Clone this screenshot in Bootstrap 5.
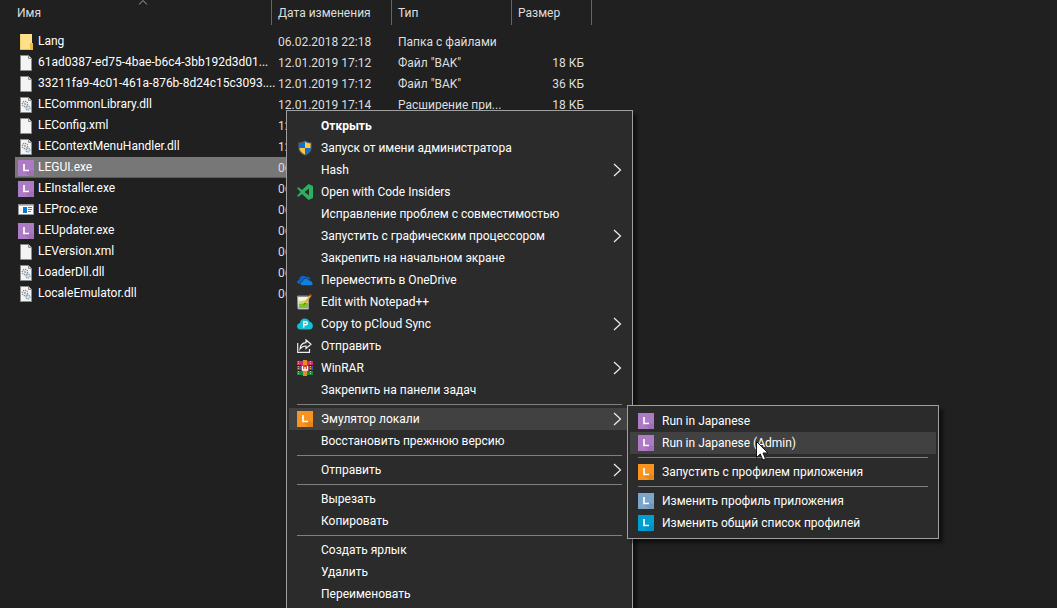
<!DOCTYPE html>
<html lang="ru">
<head>
<meta charset="utf-8">
<meta name="viewport" content="width=device-width, initial-scale=1">
<title>Locale Emulator</title>
<link href="https://cdn.jsdelivr.net/npm/bootstrap@5.3.0/dist/css/bootstrap.min.css" rel="stylesheet">
<style>
  body { background: #202020; color: #dedede; font: 12px/20px Roboto, "Open Sans", sans-serif; }
  .explorer { padding-left: 15px; }
  .sort-mark { top: 0; left: 50%; }
  .files { width: 577px; table-layout: fixed; border-collapse: separate; border-spacing: 0; }
  .files th { height: 25px; padding: 0 6px; font-weight: 400; border-right: 1px solid #636363; white-space: nowrap; }
  .files th:first-child { padding-left: 2px; }
  .files tbody::before { content: ""; display: block; height: 6px; }
  .files td { height: 21px; padding: 0 6px; white-space: nowrap; }
  .files td:first-child { padding: 0 0 0 3px; color: #fff; }
  .files td:last-child { padding-right: 8px; text-align: right; }
  .files tr.picked td { background: #777; box-shadow: inset 0 -1px #5c5c5c; }
  .name-col { width: 257px; } .date-col, .type-col { width: 120px; } .size-col { width: 80px; }
  .ico { width: 16px; height: 16px; flex: none; }
  .file-name { gap: 4px; line-height: 21px; }
  .context { background: #2b2b2b; border: 1px solid #a0a0a0; padding: 4px 2px; box-shadow: 4px 4px 3px rgba(0,0,0,.5); color: #fff; }
  .main-menu { top: 110px; left: 286px; width: 347px; }
  .sub-menu { top: -3px; left: calc(100% - 3px); width: 312px; }
  .entry { height: 22px; width: 100%; padding: 0 8px; gap: 8px; border: 0; background: none; color: inherit; text-align: left; line-height: 22px; white-space: nowrap; }
  .entry:hover, .entry.active { background: #414141; }
  .rule { margin: 3px 8px; border: 0; border-top: 1px solid #808080; opacity: 1; }
  .chev { width: 9px; height: 14px; flex: none; margin-left: auto; }
  .pointer { top: 35px; left: 128px; width: 13px; height: 20px; pointer-events: none; }
</style>
</head>
<body class="overflow-hidden vh-100">
<svg class="d-none" aria-hidden="true">
  <symbol id="page" viewBox="0 0 16 16"><path d="M2.500.5h8l3 3v12h-11z" fill="#f4f4f4" stroke="#8c8c8c"/><path d="M10.500.5v3h3" fill="#ddd" stroke="#8c8c8c"/></symbol>
  <symbol id="folder" viewBox="0 0 16 16"><path d="M2 0h12v16H2z" fill="#ffe08a"/><path d="M2.500 0v16" stroke="#f3cf68"/><path d="M12 9h3v7H2v-1h10z" fill="#e9bd3f"/></symbol>
  <symbol id="dll" viewBox="0 0 16 16"><path d="M2.500.5h8l3 3v12h-11z" fill="#f4f4f4" stroke="#8c8c8c"/><path d="M10.500.5v3h3" fill="#ddd" stroke="#8c8c8c"/><circle cx="7" cy="7" r="2.600" fill="#fff" stroke="#888" stroke-width="1.500" stroke-dasharray="1.200 .8"/><circle cx="7" cy="7" r="1" fill="#8b9aa5"/><circle cx="10" cy="11" r="2" fill="#cfe4f1" stroke="#7fa4bd" stroke-width="1.300" stroke-dasharray="1.200 .6"/></symbol>
  <symbol id="app" viewBox="0 0 16 16"><path d="M.5 2.500h15v10H.5z" fill="#fff" stroke="#999"/><path d="M1 3h14v1H1z" fill="#bbb"/><path d="M5 5h4v6H5z" fill="#0078d7"/><path d="M10 5.500h4M10 7.500h4M10 9.500h3" stroke="#777"/><path d="M2 6h2v4H2z" fill="#eee"/></symbol>
  <symbol id="ell" viewBox="0 0 16 16"><path d="M0 0h16v16H0z" fill="currentColor"/><path d="M6 11l5 5h5v-5l-5-1z" opacity=".08"/><path d="M6 4v6.500h5" fill="none" stroke="#fff" stroke-width="1.700"/></symbol>
  <symbol id="chev" viewBox="0 0 9 14"><path d="M1 1l6.500 6L1 13" fill="none" stroke="#eee" stroke-width="1.200"/></symbol>
</svg>

<main class="explorer">
  <table class="files">
    <colgroup><col class="name-col"><col class="date-col"><col class="type-col"><col class="size-col"></colgroup>
    <thead><tr>
      <th class="position-relative">Имя<svg class="sort-mark position-absolute translate-middle-x" width="9" height="5" viewBox="0 0 9 5"><path d="M.5 4.500l4-4 4 4" fill="none" stroke="#aaa"/></svg></th>
      <th>Дата изменения</th><th>Тип</th><th>Размер</th></tr></thead>
    <tbody>
      <tr><td><div class="file-name d-flex align-items-center"><svg class="ico"><use href="#folder"/></svg>Lang</div></td><td>06.02.2018 22:18</td><td>Папка с файлами</td><td></td></tr>
      <tr><td><div class="file-name d-flex align-items-center"><svg class="ico"><use href="#page"/></svg>61ad0387-ed75-4bae-b6c4-3bb192d3d01...</div></td><td>12.01.2019 17:12</td><td>Файл "BAK"</td><td>18 КБ</td></tr>
      <tr><td><div class="file-name d-flex align-items-center"><svg class="ico"><use href="#page"/></svg>33211fa9-4c01-461a-876b-8d24c15c3093....</div></td><td>12.01.2019 17:12</td><td>Файл "BAK"</td><td>36 КБ</td></tr>
      <tr><td><div class="file-name d-flex align-items-center"><svg class="ico"><use href="#dll"/></svg>LECommonLibrary.dll</div></td><td>12.01.2019 17:14</td><td>Расширение при...</td><td>18 КБ</td></tr>
      <tr><td><div class="file-name d-flex align-items-center"><svg class="ico"><use href="#page"/></svg>LEConfig.xml</div></td><td>12</td><td></td><td></td></tr>
      <tr><td><div class="file-name d-flex align-items-center"><svg class="ico"><use href="#dll"/></svg>LEContextMenuHandler.dll</div></td><td>12</td><td></td><td></td></tr>
      <tr class="picked"><td><div class="file-name d-flex align-items-center"><svg class="ico" color="#ad7ac4"><use href="#ell"/></svg>LEGUI.exe</div></td><td>06</td><td></td><td></td></tr>
      <tr><td><div class="file-name d-flex align-items-center"><svg class="ico" color="#ad7ac4"><use href="#ell"/></svg>LEInstaller.exe</div></td><td>06</td><td></td><td></td></tr>
      <tr><td><div class="file-name d-flex align-items-center"><svg class="ico"><use href="#app"/></svg>LEProc.exe</div></td><td>06</td><td></td><td></td></tr>
      <tr><td><div class="file-name d-flex align-items-center"><svg class="ico" color="#ad7ac4"><use href="#ell"/></svg>LEUpdater.exe</div></td><td>06</td><td></td><td></td></tr>
      <tr><td><div class="file-name d-flex align-items-center"><svg class="ico"><use href="#page"/></svg>LEVersion.xml</div></td><td>06</td><td></td><td></td></tr>
      <tr><td><div class="file-name d-flex align-items-center"><svg class="ico"><use href="#dll"/></svg>LoaderDll.dll</div></td><td>06</td><td></td><td></td></tr>
      <tr><td><div class="file-name d-flex align-items-center"><svg class="ico"><use href="#dll"/></svg>LocaleEmulator.dll</div></td><td>06</td><td></td><td></td></tr>
    </tbody>
  </table>
</main>

<div class="context main-menu position-absolute" role="menu">
  <button class="entry d-flex align-items-center fw-bold"><span class="ico"></span>Открыть</button>
  <button class="entry d-flex align-items-center"><svg class="ico" viewBox="0 0 16 16"><path d="M8 .5C6 2 4 2.500 1.500 2.500V8c0 3.500 3 6 6.500 7.500C11.500 14 14.500 11.500 14.500 8V2.500C12 2.500 10 2 8 .5z" fill="#5b6470"/><path d="M8 1.800C6.500 3 4.500 3.300 2.500 3.400V8H8z" fill="#0f6fd0"/><path d="M8 1.800c1.500 1.200 3.500 1.500 5.500 1.600V8H8z" fill="#ffc83d"/><path d="M2.500 8H8v6.500C5 13 2.700 11 2.500 8z" fill="#ffc83d"/><path d="M8 8h5.500c-.2 3-2.500 5-5.500 6.500z" fill="#0f6fd0"/></svg>Запуск от имени администратора</button>
  <button class="entry d-flex align-items-center"><span class="ico"></span>Hash<svg class="chev"><use href="#chev"/></svg></button>
  <button class="entry d-flex align-items-center"><svg class="ico" viewBox="0 0 16 16"><path d="M11.500 0L16 2v12l-4.500 2L5 10 1.500 12.800 0 12l3.500-4L0 4l1.500-.8L5 6zM12 4.500L7.500 8l4.500 3.500z" fill="#2bb15f" fill-rule="evenodd"/></svg>Open with Code Insiders</button>
  <button class="entry d-flex align-items-center"><span class="ico"></span>Исправление проблем с совместимостью</button>
  <button class="entry d-flex align-items-center"><span class="ico"></span>Запустить с графическим процессором<svg class="chev"><use href="#chev"/></svg></button>
  <button class="entry d-flex align-items-center"><span class="ico"></span>Закрепить на начальном экране</button>
  <button class="entry d-flex align-items-center"><svg class="ico" viewBox="0 0 16 16"><path d="M2.500 12C-.5 12-.5 8 2.300 8 2 4 6.500 2.500 9 5c2.500-.8 4 .5 4.300 2.500L8 7z" fill="#0a63c9"/><path d="M5.500 13.500c-3 0-3-4 0-4.200.5-3.300 5-4 6.500-1 2-.2 2.700.8 2.800 1.700 1.700.5 1.500 3.500-.3 3.500z" fill="#0f7fe0" stroke="#2b2b2b" stroke-width=".6"/></svg>Переместить в OneDrive</button>
  <button class="entry d-flex align-items-center"><svg class="ico" viewBox="0 0 16 16"><path d="M.5 2h11v13H1z" fill="#f4f4e8" stroke="#999"/><path d="M2 8l9-1v7H2z" fill="#7bc51e"/><path d="M2 7l9-1v3l-9 1z" fill="#bfe36c"/><path d="M2 1v2M4 1v2M6 1v2M8 1v2M10 1v2" stroke="#555"/><path d="M13.500 1.500L8 9" stroke="#e8ae30" stroke-width="2"/><path d="M13 2l1-1.500" stroke="#d33" stroke-width="2.500"/><path d="M7 10.500L8.500 9" stroke="#333"/></svg>Edit with Notepad++</button>
  <button class="entry d-flex align-items-center"><svg class="ico" viewBox="0 0 16 16"><path d="M3.500 13.500C-1 13.500-1 7.500 3 7c0-5 7.500-6.500 9.500-1.500C17 6.500 17 13.500 12.500 13.500z" fill="#17bed0"/><path d="M6.700 11.500V5.700h2.100c2 0 2 3 0 3H6.700" fill="none" stroke="#fff" stroke-width="1.400"/></svg>Copy to pCloud Sync<svg class="chev"><use href="#chev"/></svg></button>
  <button class="entry d-flex align-items-center"><svg class="ico" viewBox="0 0 16 16"><path d="M.7 5v9.300h11.800V11M9 2l5 4.300-5 4.200V8C6.500 8 4.500 9 3 11c.3-3.500 2.500-6 6-6.300z" fill="none" stroke="#eee" stroke-width="1.200"/></svg>Отправить</button>
  <button class="entry d-flex align-items-center"><svg class="ico" viewBox="0 0 16 16"><path d="M0 1h16v4H0z" fill="#cf2e63"/><path d="M0 6h16v4H0z" fill="#5148b5"/><path d="M0 11h16v4H0z" fill="#168a3d"/><path d="M0 5.500h16M0 10.500h16" stroke="#222"/><path d="M1.500 1v3.500M1.500 6v4M1.500 11v4M13.500 1v3.500M13.500 6v4M13.500 11v4" stroke="#e8bd48" stroke-dasharray="1 1"/><path d="M6 0h4v16H6z" fill="#e88a28"/><path d="M4.500 5h7v6h-7z" fill="#d33c20"/><path d="M5.500 6v4h5V6M8 7v3" fill="none" stroke="#fff" stroke-width="1.300"/></svg>WinRAR<svg class="chev"><use href="#chev"/></svg></button>
  <button class="entry d-flex align-items-center"><span class="ico"></span>Закрепить на панели задач</button>
  <hr class="rule">
  <div class="flyout position-relative">
    <button class="entry active d-flex align-items-center" aria-expanded="true"><svg class="ico" color="#f7931e"><use href="#ell"/></svg>Эмулятор локали<svg class="chev"><use href="#chev"/></svg></button>
    <div class="context sub-menu position-absolute" role="menu">
      <button class="entry d-flex align-items-center"><svg class="ico" color="#ad7ac4"><use href="#ell"/></svg>Run in Japanese</button>
      <button class="entry active d-flex align-items-center"><svg class="ico" color="#ad7ac4"><use href="#ell"/></svg>Run in Japanese (Admin)</button>
      <hr class="rule">
      <button class="entry d-flex align-items-center"><svg class="ico" color="#f7931e"><use href="#ell"/></svg>Запустить с профилем приложения</button>
      <hr class="rule">
      <button class="entry d-flex align-items-center"><svg class="ico" color="#7ba5ca"><use href="#ell"/></svg>Изменить профиль приложения</button>
      <button class="entry d-flex align-items-center"><svg class="ico" color="#009fd2"><use href="#ell"/></svg>Изменить общий список профилей</button>
      <svg class="pointer position-absolute" viewBox="0 0 13 20"><path d="M.5.5v16l3.800-3.500 2.500 6 2.700-1.200L7 12h5z" fill="#fff" stroke="#111"/></svg>
    </div>
  </div>
  <button class="entry d-flex align-items-center"><span class="ico"></span>Восстановить прежнюю версию</button>
  <hr class="rule">
  <button class="entry d-flex align-items-center"><span class="ico"></span>Отправить<svg class="chev"><use href="#chev"/></svg></button>
  <hr class="rule">
  <button class="entry d-flex align-items-center"><span class="ico"></span>Вырезать</button>
  <button class="entry d-flex align-items-center"><span class="ico"></span>Копировать</button>
  <hr class="rule">
  <button class="entry d-flex align-items-center"><span class="ico"></span>Создать ярлык</button>
  <button class="entry d-flex align-items-center"><span class="ico"></span>Удалить</button>
  <button class="entry d-flex align-items-center"><span class="ico"></span>Переименовать</button>
</div>
<script src="https://cdn.jsdelivr.net/npm/bootstrap@5.3.0/dist/js/bootstrap.bundle.min.js"></script>
</body>
</html>
